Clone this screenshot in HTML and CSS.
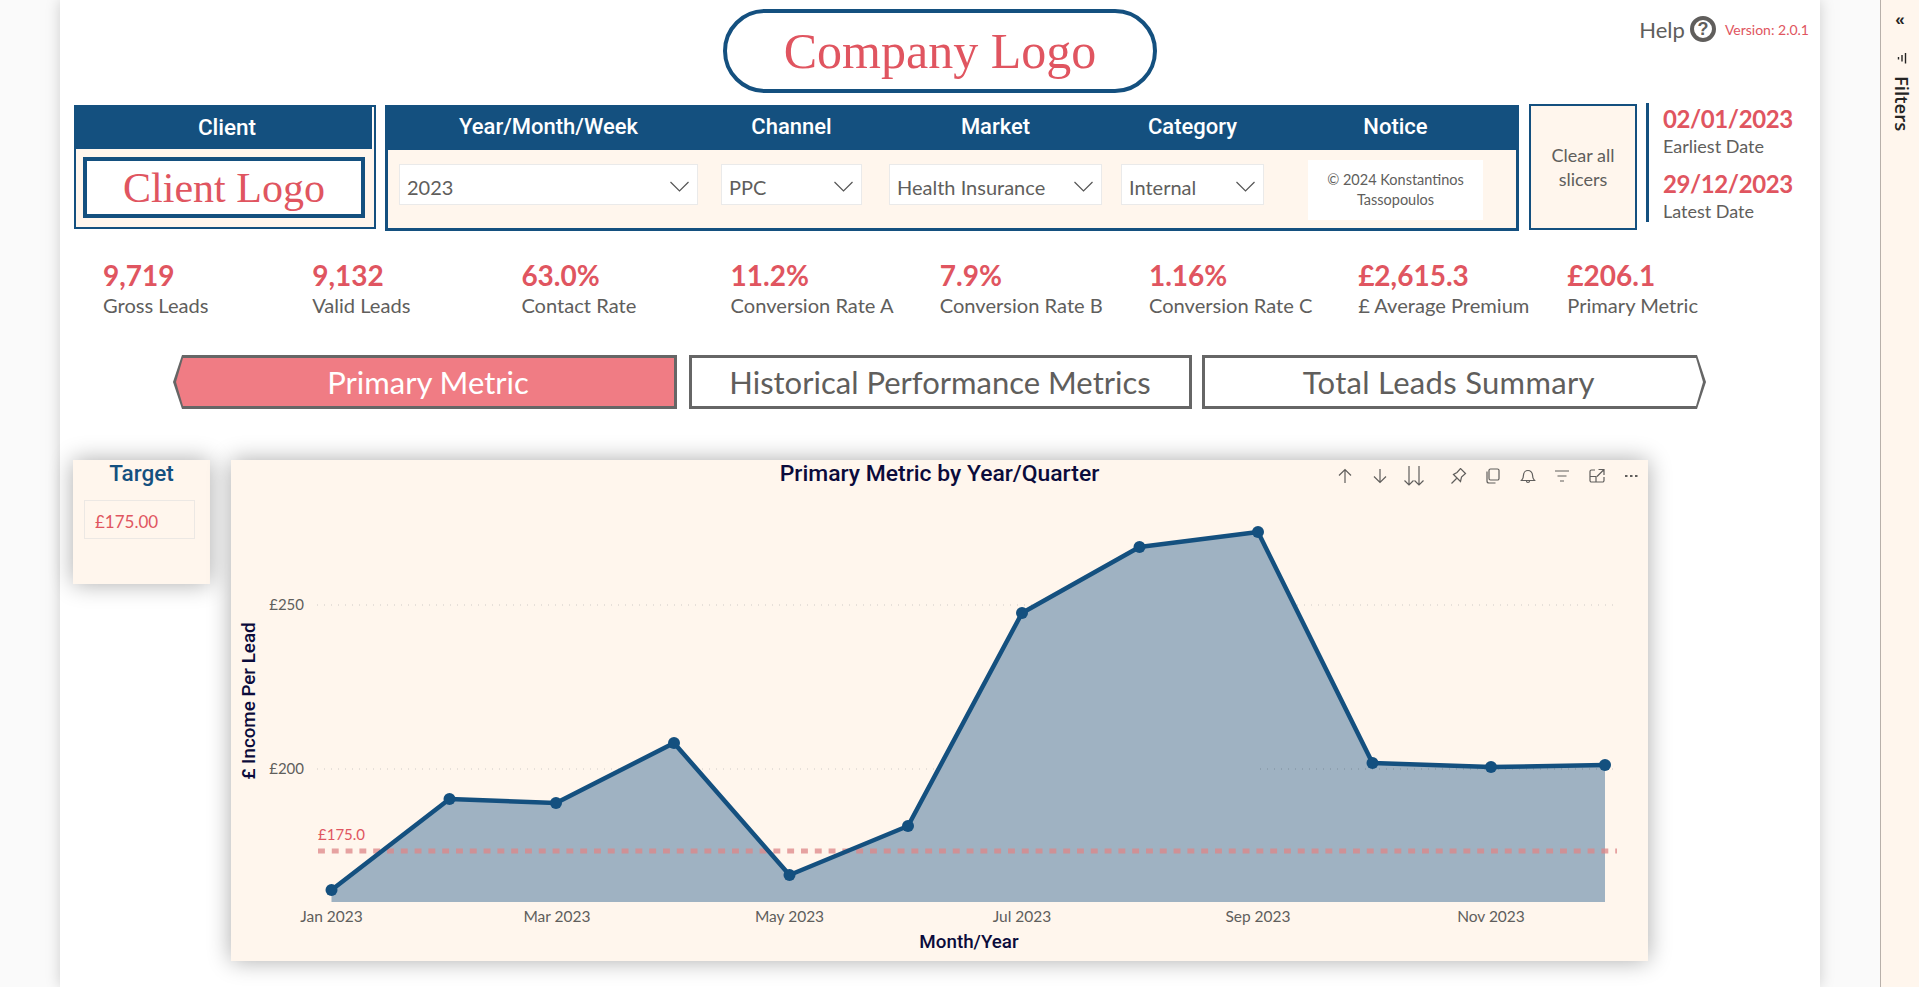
FILE: index.html
```html
<!DOCTYPE html>
<html lang="en">
<head>
  <meta charset="UTF-8">
  <title>Primary Metric Report</title>
  <link rel="stylesheet" href="styles.css">
</head>
<body>
  <div class="gutter"></div>

  <main class="page">
    <div class="top-row">
      <div class="company-logo">Company Logo</div>
      <div class="help-group">
        <span class="help-text">Help</span>
        <span class="help-icon">?</span>
        <span class="version">Version: 2.0.1</span>
      </div>
    </div>

    <div class="slicer-row">
      <div class="client-panel">
        <div class="client-head">Client</div>
        <div class="client-logo">Client Logo</div>
      </div>

      <div class="filter-panel">
        <div class="filter-head">
          <div class="col-year">Year/Month/Week</div>
          <div class="col-channel">Channel</div>
          <div class="col-market">Market</div>
          <div class="col-category">Category</div>
          <div class="col-notice">Notice</div>
        </div>
        <div class="filter-body">
          <div class="dropdown col-year">2023
            <svg class="chevron" viewBox="0 0 20 11"><path d="M1 1l9 9 9-9"/></svg>
          </div>
          <div class="dropdown col-channel">PPC
            <svg class="chevron" viewBox="0 0 20 11"><path d="M1 1l9 9 9-9"/></svg>
          </div>
          <div class="dropdown col-market">Health Insurance
            <svg class="chevron" viewBox="0 0 20 11"><path d="M1 1l9 9 9-9"/></svg>
          </div>
          <div class="dropdown col-category">Internal
            <svg class="chevron" viewBox="0 0 20 11"><path d="M1 1l9 9 9-9"/></svg>
          </div>
          <div class="notice col-notice">© 2024 Konstantinos Tassopoulos</div>
        </div>
      </div>

      <div class="clear-btn">Clear all<br>slicers</div>

      <div class="dates">
        <div class="date-value">02/01/2023</div>
        <div class="date-label">Earliest Date</div>
        <div class="date-value second">29/12/2023</div>
        <div class="date-label">Latest Date</div>
      </div>
    </div>

    <div class="kpi-row">
      <div class="kpi"><div class="kpi-value">9,719</div><div class="kpi-label">Gross Leads</div></div>
      <div class="kpi"><div class="kpi-value">9,132</div><div class="kpi-label">Valid Leads</div></div>
      <div class="kpi"><div class="kpi-value">63.0%</div><div class="kpi-label">Contact Rate</div></div>
      <div class="kpi"><div class="kpi-value">11.2%</div><div class="kpi-label">Conversion Rate A</div></div>
      <div class="kpi"><div class="kpi-value">7.9%</div><div class="kpi-label">Conversion Rate B</div></div>
      <div class="kpi"><div class="kpi-value">1.16%</div><div class="kpi-label">Conversion Rate C</div></div>
      <div class="kpi"><div class="kpi-value">£2,615.3</div><div class="kpi-label">£ Average Premium</div></div>
      <div class="kpi"><div class="kpi-value">£206.1</div><div class="kpi-label">Primary Metric</div></div>
    </div>

    <div class="tabs">
      <div class="tab tab-active tab-first"><span>Primary Metric</span></div>
      <div class="tab tab-middle"><span>Historical Performance Metrics</span></div>
      <div class="tab tab-last"><span>Total Leads Summary</span></div>
    </div>

    <div class="content-row">
      <div class="target-card">
        <div class="target-title">Target</div>
        <div class="target-input">£175.00</div>
      </div>

      <div class="chart-card">
        <div class="chart-title">Primary Metric by Year/Quarter</div>
        <div class="chart-icons">
          <svg class="icon" viewBox="0 0 16 16"><path d="M8 15V1.500M2 7.500l6-6 6 6"/></svg>
          <svg class="icon" viewBox="0 0 16 16"><path d="M8 1v13.500M2 8.500l6 6 6-6"/></svg>
          <svg class="icon icon-wide" viewBox="0 0 20 20"><path d="M5 0v19M.5 14.500L5 19l4.500-4.500M15 0v19M10.500 14.500L15 19l4.500-4.500"/></svg>
          <svg class="icon icon-pin" viewBox="0 0 16 16"><path d="M.5 15.500l5-5M2.500 6.500l7 7 1-4.500 4-3.500-5-5L6 4.500z"/></svg>
          <svg class="icon" viewBox="0 0 16 16"><path d="M5.500 1h7A1.500 1.500 0 0 1 14 2.500v8a1.500 1.500 0 0 1-1.500 1.500h-7A1.500 1.500 0 0 1 4 10.500v-8A1.500 1.500 0 0 1 5.500 1zM2 3.500V13a2 2 0 0 0 2 2h6.500"/></svg>
          <svg class="icon" viewBox="0 0 16 16"><path d="M1.500 12.500h13c-1.500-1.500-2-2.500-2-5.500a4.500 4.500 0 0 0-9 0c0 3-.5 4-2 5.500zM6.500 12.500v.5a1.500 1.500 0 0 0 3 0v-.5"/></svg>
          <svg class="icon" viewBox="0 0 16 16"><path d="M1 3h14M3.500 8h9M6 13h4"/></svg>
          <svg class="icon" viewBox="0 0 16 16"><path d="M6 2H2.500A1.500 1.500 0 0 0 1 3.500v9A1.500 1.500 0 0 0 2.500 14h11a1.500 1.500 0 0 0 1.500-1.500V9M9.500 1.500H15V7M15 1.500L8 8.500M1 8.500h6v5.500"/></svg>
          <svg class="icon icon-dots" viewBox="0 0 16 16"><path d="M2 8h2.500M7 8h2.500M12 8h2.500"/></svg>
        </div>

        <svg class="plot" viewBox="231 490 1417 471">
          <line class="grid" x1="317" y1="605" x2="1618" y2="605"/>
          <line class="grid" x1="317" y1="769" x2="1618" y2="769"/>

          <polygon class="area" points="331.500,890 449.500,799 556,803 674,743 789.500,875 908,826 1022,613 1139.500,547 1258,532 1372.500,763 1491,767 1605,765 1605,902 331.500,902"/>
          <line class="grid grid-over" x1="1260" y1="769" x2="1605" y2="769"/>
          <line class="target-line" x1="318" y1="851" x2="1617" y2="851"/>
          <polyline class="series" points="331.500,890 449.500,799 556,803 674,743 789.500,875 908,826 1022,613 1139.500,547 1258,532 1372.500,763 1491,767 1605,765"/>

          <g class="dots">
            <circle cx="331.500" cy="890" r="6"/>
            <circle cx="449.500" cy="799" r="6"/>
            <circle cx="556" cy="803" r="6"/>
            <circle cx="674" cy="743" r="6"/>
            <circle cx="789.500" cy="875" r="6"/>
            <circle cx="908" cy="826" r="6"/>
            <circle cx="1022" cy="613" r="6"/>
            <circle cx="1139.500" cy="547" r="6"/>
            <circle cx="1258" cy="532" r="6"/>
            <circle cx="1372.500" cy="763" r="6"/>
            <circle cx="1491" cy="767" r="6"/>
            <circle cx="1605" cy="765" r="6"/>
          </g>

          <text class="y-tick" x="304" y="609.500">£250</text>
          <text class="y-tick" x="304" y="773.500">£200</text>
          <text class="target-label" x="318" y="839.500">£175.0</text>

          <text class="x-tick" x="331.500" y="921.500">Jan 2023</text>
          <text class="x-tick" x="557" y="921.500">Mar 2023</text>
          <text class="x-tick" x="789.500" y="921.500">May 2023</text>
          <text class="x-tick" x="1022" y="921.500">Jul 2023</text>
          <text class="x-tick" x="1258" y="921.500">Sep 2023</text>
          <text class="x-tick" x="1491" y="921.500">Nov 2023</text>

          <text class="axis-title" x="969" y="948">Month/Year</text>
          <text class="axis-title" transform="translate(255 701) rotate(-90)">£ Income Per Lead</text>
        </svg>
      </div>
    </div>
  </main>

  <div class="gutter gutter-right"></div>

  <aside class="filter-pane">
    <div class="pane-chevron">«</div>
    <svg class="pane-icon" viewBox="0 0 10 12"><path d="M1.500 5v2.500M5 3v6.500M8.500 1v10.500"/></svg>
    <div class="pane-label">Filters</div>
  </aside>
</body>
</html>
```

FILE: styles.css
```css
html, body {
  margin: 0;
  height: 100%;
}

body {
  display: flex;
  width: 1919px;
  height: 987px;
  overflow: hidden;
  background-color: #fafafa;
  font-family: Lato, "Open Sans", sans-serif;
  color: #605e5c;
}

.gutter {
  width: 60px;
  flex: none;
}

.page {
  width: 1760px;
  flex: none;
  background-color: #fff;
  box-shadow: 0 0 14px rgba(0, 0, 0, 0.18);
  position: relative;
}

/* top row */
.top-row {
  display: flex;
  height: 103px;
  padding-right: 11px;
  box-sizing: border-box;
}

.company-logo {
  width: 434px;
  height: 84px;
  margin: 9px 0 0 663px;
  box-sizing: border-box;
  border: 4px solid #14507f;
  border-radius: 42px;
  font-family: "Liberation Serif", serif;
  font-size: 50px;
  line-height: 76px;
  text-align: center;
  color: #e05560;
}

.help-group {
  display: flex;
  align-items: center;
  height: 26px;
  margin: 16px 0 0 auto;
}

.help-text {
  font-size: 22px;
}

.help-icon {
  width: 26px;
  height: 26px;
  margin-left: 5px;
  box-sizing: border-box;
  border: 4px solid #605e5c;
  border-radius: 50%;
  font-family: "Liberation Sans", sans-serif;
  font-weight: 700;
  font-size: 18px;
  line-height: 18px;
  text-align: center;
}

.version {
  margin-left: 9px;
  font-size: 14px;
  color: #e05560;
}

/* slicer row */
.slicer-row {
  display: flex;
  align-items: flex-start;
  height: 128px;
  padding-left: 14px;
}

.client-panel {
  width: 302px;
  height: 124px;
  margin-top: 2px;
  box-sizing: border-box;
  border: 2px solid #14507f;
  background-color: #fff6ed;
}

.client-head {
  height: 42px;
  padding-left: 6px;
  box-sizing: border-box;
  background-color: #14507f;
  border-right: 1px solid #fff;
  margin-right: 1px;
  font-family: Roboto, sans-serif;
  font-weight: 500;
  font-size: 22.500px;
  line-height: 41px;
  text-align: center;
  color: #fff;
}

.client-logo {
  width: 282px;
  height: 61px;
  margin: 8px 0 0 7px;
  box-sizing: border-box;
  border: 4px solid #14507f;
  background-color: #fff;
  font-family: "Liberation Serif", serif;
  font-size: 42px;
  line-height: 54px;
  text-align: center;
  color: #e05560;
}

.filter-panel {
  width: 1134px;
  height: 126px;
  margin: 2px 0 0 9px;
  box-sizing: border-box;
  border: 3px solid #14507f;
  background-color: #fff6ed;
}

.filter-head {
  display: flex;
  height: 42px;
  background-color: #14507f;
  font-family: Roboto, sans-serif;
  font-weight: 500;
  font-size: 22px;
  line-height: 38px;
  text-align: center;
  color: #fff;
}

.filter-body {
  display: flex;
  align-items: flex-start;
  padding-top: 10px;
}

.col-year {
  width: 299px;
  margin-left: 11px;
}

.col-channel {
  width: 141px;
  margin-left: 23px;
}

.col-market {
  width: 213px;
  margin-left: 27px;
}

.col-category {
  width: 143px;
  margin-left: 19px;
}

.col-notice {
  width: 175px;
  margin-left: 44px;
}

.dropdown {
  display: flex;
  align-items: center;
  justify-content: space-between;
  height: 41px;
  margin-top: 4px;
  padding: 4px 7px 0 7px;
  box-sizing: border-box;
  border: 1px solid #eaeaea;
  background-color: #fff;
  font-size: 20px;
}

.chevron {
  width: 21px;
  height: 11px;
  fill: none;
  stroke: #555;
  stroke-width: 1.200;
}

.notice {
  display: flex;
  align-items: center;
  height: 60px;
  padding: 0 14px;
  box-sizing: border-box;
  background-color: #fff;
  font-size: 14.500px;
  line-height: 20px;
  text-align: center;
}

.clear-btn {
  width: 108px;
  height: 126px;
  margin: 1px 0 0 10px;
  padding-top: 37px;
  box-sizing: border-box;
  border: 2px solid #14507f;
  background-color: #fff6ed;
  font-size: 18px;
  line-height: 24px;
  text-align: center;
}

.dates {
  height: 119px;
  margin-left: 9px;
  padding: 1px 0 0 14px;
  box-sizing: border-box;
  border-left: 3px solid #14507f;
}

.date-value {
  font-weight: 700;
  font-size: 24px;
  letter-spacing: -0.400px;
  line-height: 30px;
  color: #e05560;
}

.date-value.second {
  margin-top: 10px;
}

.date-label {
  font-size: 18px;
  line-height: 25px;
}

/* kpis */
.kpi-row {
  display: flex;
  margin-top: 28px;
  padding-left: 43px;
}

.kpi {
  width: 209.200px;
  flex: none;
}

.kpi-value {
  font-weight: 700;
  font-size: 28px;
  line-height: 32px;
  color: #e05560;
}

.kpi-label {
  margin-top: 2px;
  font-size: 20.100px;
  line-height: 24px;
}

/* tabs */
.tabs {
  display: flex;
  gap: 11.500px;
  margin-top: 38px;
  padding-left: 113px;
}

.tab {
  position: relative;
  display: flex;
  align-items: center;
  justify-content: center;
  width: 503px;
  height: 54px;
  background-color: #666;
  font-size: 31px;
}

.tab::before {
  content: "";
  position: absolute;
  inset: 3px;
  background-color: #fff;
}

.tab span {
  position: relative;
}

.tab-first {
  width: 504px;
  padding-left: 6px;
  box-sizing: border-box;
  clip-path: polygon(9px 0, 100% 0, 100% 100%, 9px 100%, 0 50%);
}

.tab-first::before {
  clip-path: polygon(7px 0, 100% 0, 100% 100%, 7px 100%, 0 50%);
}

.tab-last {
  width: 504.500px;
  margin-left: -1.500px;
  padding-right: 10px;
  box-sizing: border-box;
  letter-spacing: 0.300px;
  clip-path: polygon(0 0, calc(100% - 9px) 0, 100% 50%, calc(100% - 9px) 100%, 0 100%);
}

.tab-last::before {
  clip-path: polygon(0 0, calc(100% - 7px) 0, 100% 50%, calc(100% - 7px) 100%, 0 100%);
}

.tab-active {
  color: #fff;
}

.tab-active::before {
  background-color: #f07c84;
}

/* report visuals */
.content-row {
  display: flex;
  align-items: flex-start;
  margin-top: 51px;
  padding-left: 13px;
}

.target-card {
  width: 137px;
  height: 124px;
  background-color: #fff6ed;
  box-shadow: 0 0 22px rgba(0, 0, 0, 0.33);
}

.target-title {
  font-family: Roboto, sans-serif;
  font-weight: 500;
  font-size: 22.500px;
  line-height: 27px;
  text-align: center;
  color: #14507f;
}

.target-input {
  width: 111px;
  height: 39px;
  margin: 13px 0 0 11px;
  padding-left: 10px;
  box-sizing: border-box;
  border: 1px solid #ece8e4;
  font-size: 17px;
  line-height: 41px;
  color: #e05560;
}

.chart-card {
  position: relative;
  width: 1417px;
  height: 501px;
  margin-left: 21px;
  background-color: #fff6ed;
  box-shadow: 0 0 22px rgba(0, 0, 0, 0.33);
}

.chart-title {
  height: 30px;
  font-family: Roboto, sans-serif;
  font-weight: 500;
  font-size: 22.900px;
  line-height: 28px;
  text-align: center;
  color: #0b0b3b;
}

.chart-icons {
  position: absolute;
  top: 5px;
  right: 9px;
  display: flex;
  align-items: center;
  gap: 18.500px;
}

.icon {
  width: 16px;
  height: 16px;
  fill: none;
  stroke: #605e5c;
  stroke-width: 1.200;
}

.icon-wide {
  width: 20px;
  height: 22px;
  margin: 0 8px 0 -2px;
}

.icon-dots {
  stroke-width: 2;
}

.plot {
  display: block;
  width: 1417px;
  height: 471px;
}

.grid {
  stroke: #cfcac6;
  stroke-width: 1;
  stroke-dasharray: 1 6;
}

.grid-over {
  stroke: #7d8d9c;
}

.area {
  fill: #9fb2c2;
}

.target-line {
  stroke: #dd8587;
  stroke-opacity: 0.750;
  stroke-width: 5;
  stroke-dasharray: 6.900 6.900;
}

.series {
  fill: none;
  stroke: #14507f;
  stroke-width: 4.500;
  stroke-linejoin: round;
}

.dots {
  fill: #14507f;
}

.y-tick {
  font-size: 15px;
  text-anchor: end;
  fill: #605e5c;
}

.target-label {
  font-size: 15px;
  fill: #e05560;
}

.x-tick {
  font-size: 15.500px;
  text-anchor: middle;
  fill: #605e5c;
}

.axis-title {
  font-family: Roboto, sans-serif;
  font-weight: 500;
  font-size: 18.800px;
  text-anchor: middle;
  fill: #0b0b3b;
}

/* right hand filter pane */
.gutter-right {
  width: 60px;
}

.filter-pane {
  display: flex;
  flex-direction: column;
  align-items: center;
  width: 39px;
  flex: none;
  box-sizing: border-box;
  border-left: 1px solid #b8b0aa;
  background-color: #fff6ed;
  color: #252423;
}

.pane-chevron {
  margin-top: 10px;
  font-family: "Liberation Sans", sans-serif;
  font-weight: 700;
  font-size: 17px;
  line-height: 20px;
}

.pane-icon {
  width: 10px;
  height: 12px;
  margin: 22px 0 0 3px;
  fill: none;
  stroke: #252423;
  stroke-width: 1.400;
}

.pane-label {
  margin: 12px 0 0 3px;
  writing-mode: vertical-rl;
  font-family: "Open Sans", sans-serif;
  font-weight: 600;
  font-size: 18.500px;
  line-height: 22px;
}
```
